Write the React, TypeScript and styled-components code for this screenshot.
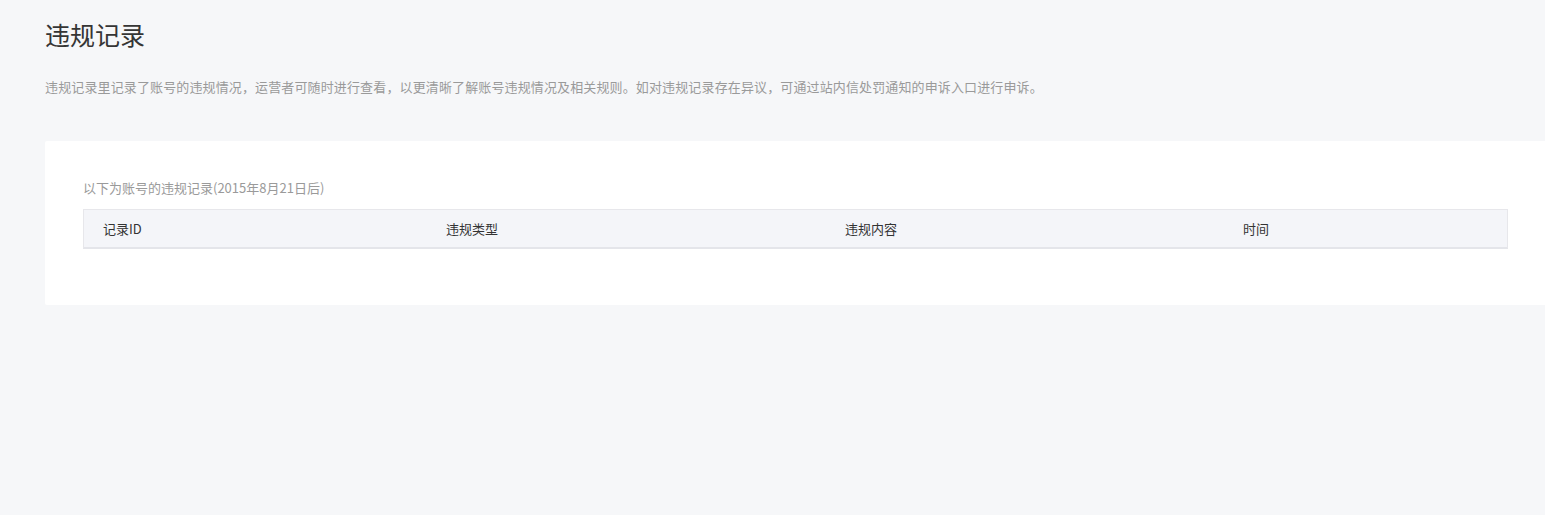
import React from "react";
import styled, { createGlobalStyle } from "styled-components";

const GlobalStyle = createGlobalStyle`
  html, body {
    margin: 0;
    padding: 0;
    background: #f6f7f9;
  }
  body {
    font-family: "Noto Sans CJK SC", "Liberation Sans", sans-serif;
    -webkit-font-smoothing: antialiased;
  }
`;

const Page = styled.div`
  min-height: 515px;
  padding: 14px 0 0 45px;
  box-sizing: border-box;
  background: #f6f7f9;
`;

const Title = styled.h2`
  margin: 0;
  font-size: 25px;
  font-weight: 400;
  line-height: 40px;
  color: #353535;
`;

const Desc = styled.p`
  margin: 23px 0 0 0;
  font-size: 13px;
  line-height: 20px;
  letter-spacing: 0.13px;
  color: #9a9a9a;
`;

const Card = styled.section`
  margin-top: 44px;
  background: #ffffff;
  border-radius: 2px 0 0 2px;
  padding: 37px 37px 56px 38px;
`;

const Caption = styled.div`
  font-size: 13px;
  line-height: 20px;
  color: #9a9a9a;
  margin-bottom: 11px;
`;

const HeadRow = styled.div`
  display: grid;
  grid-template-columns: 343px 399px 398px 1fr;
  height: 37px;
  align-items: center;
  background: #f4f5f9;
  border: 1px solid #e7e7eb;
  border-bottom: 2px solid #e4e5ea;
`;

const HeadCell = styled.div`
  padding-left: 19px;
  font-size: 13px;
  color: #333333;
`;

const columns = ["记录ID", "违规类型", "违规内容", "时间"];

export default function App() {
  return (
    <>
      <GlobalStyle />
      <Page>
        <Title>违规记录</Title>
        <Desc>
          违规记录里记录了账号的违规情况，运营者可随时进行查看，以更清晰了解账号违规情况及相关规则。如对违规记录存在异议，可通过站内信处罚通知的申诉入口进行申诉。
        </Desc>
        <Card>
          <Caption>以下为账号的违规记录(2015年8月21日后)</Caption>
          <div role="table">
            <HeadRow role="row">
              {columns.map((c) => (
                <HeadCell key={c} role="columnheader">
                  {c}
                </HeadCell>
              ))}
            </HeadRow>
          </div>
        </Card>
      </Page>
    </>
  );
}
